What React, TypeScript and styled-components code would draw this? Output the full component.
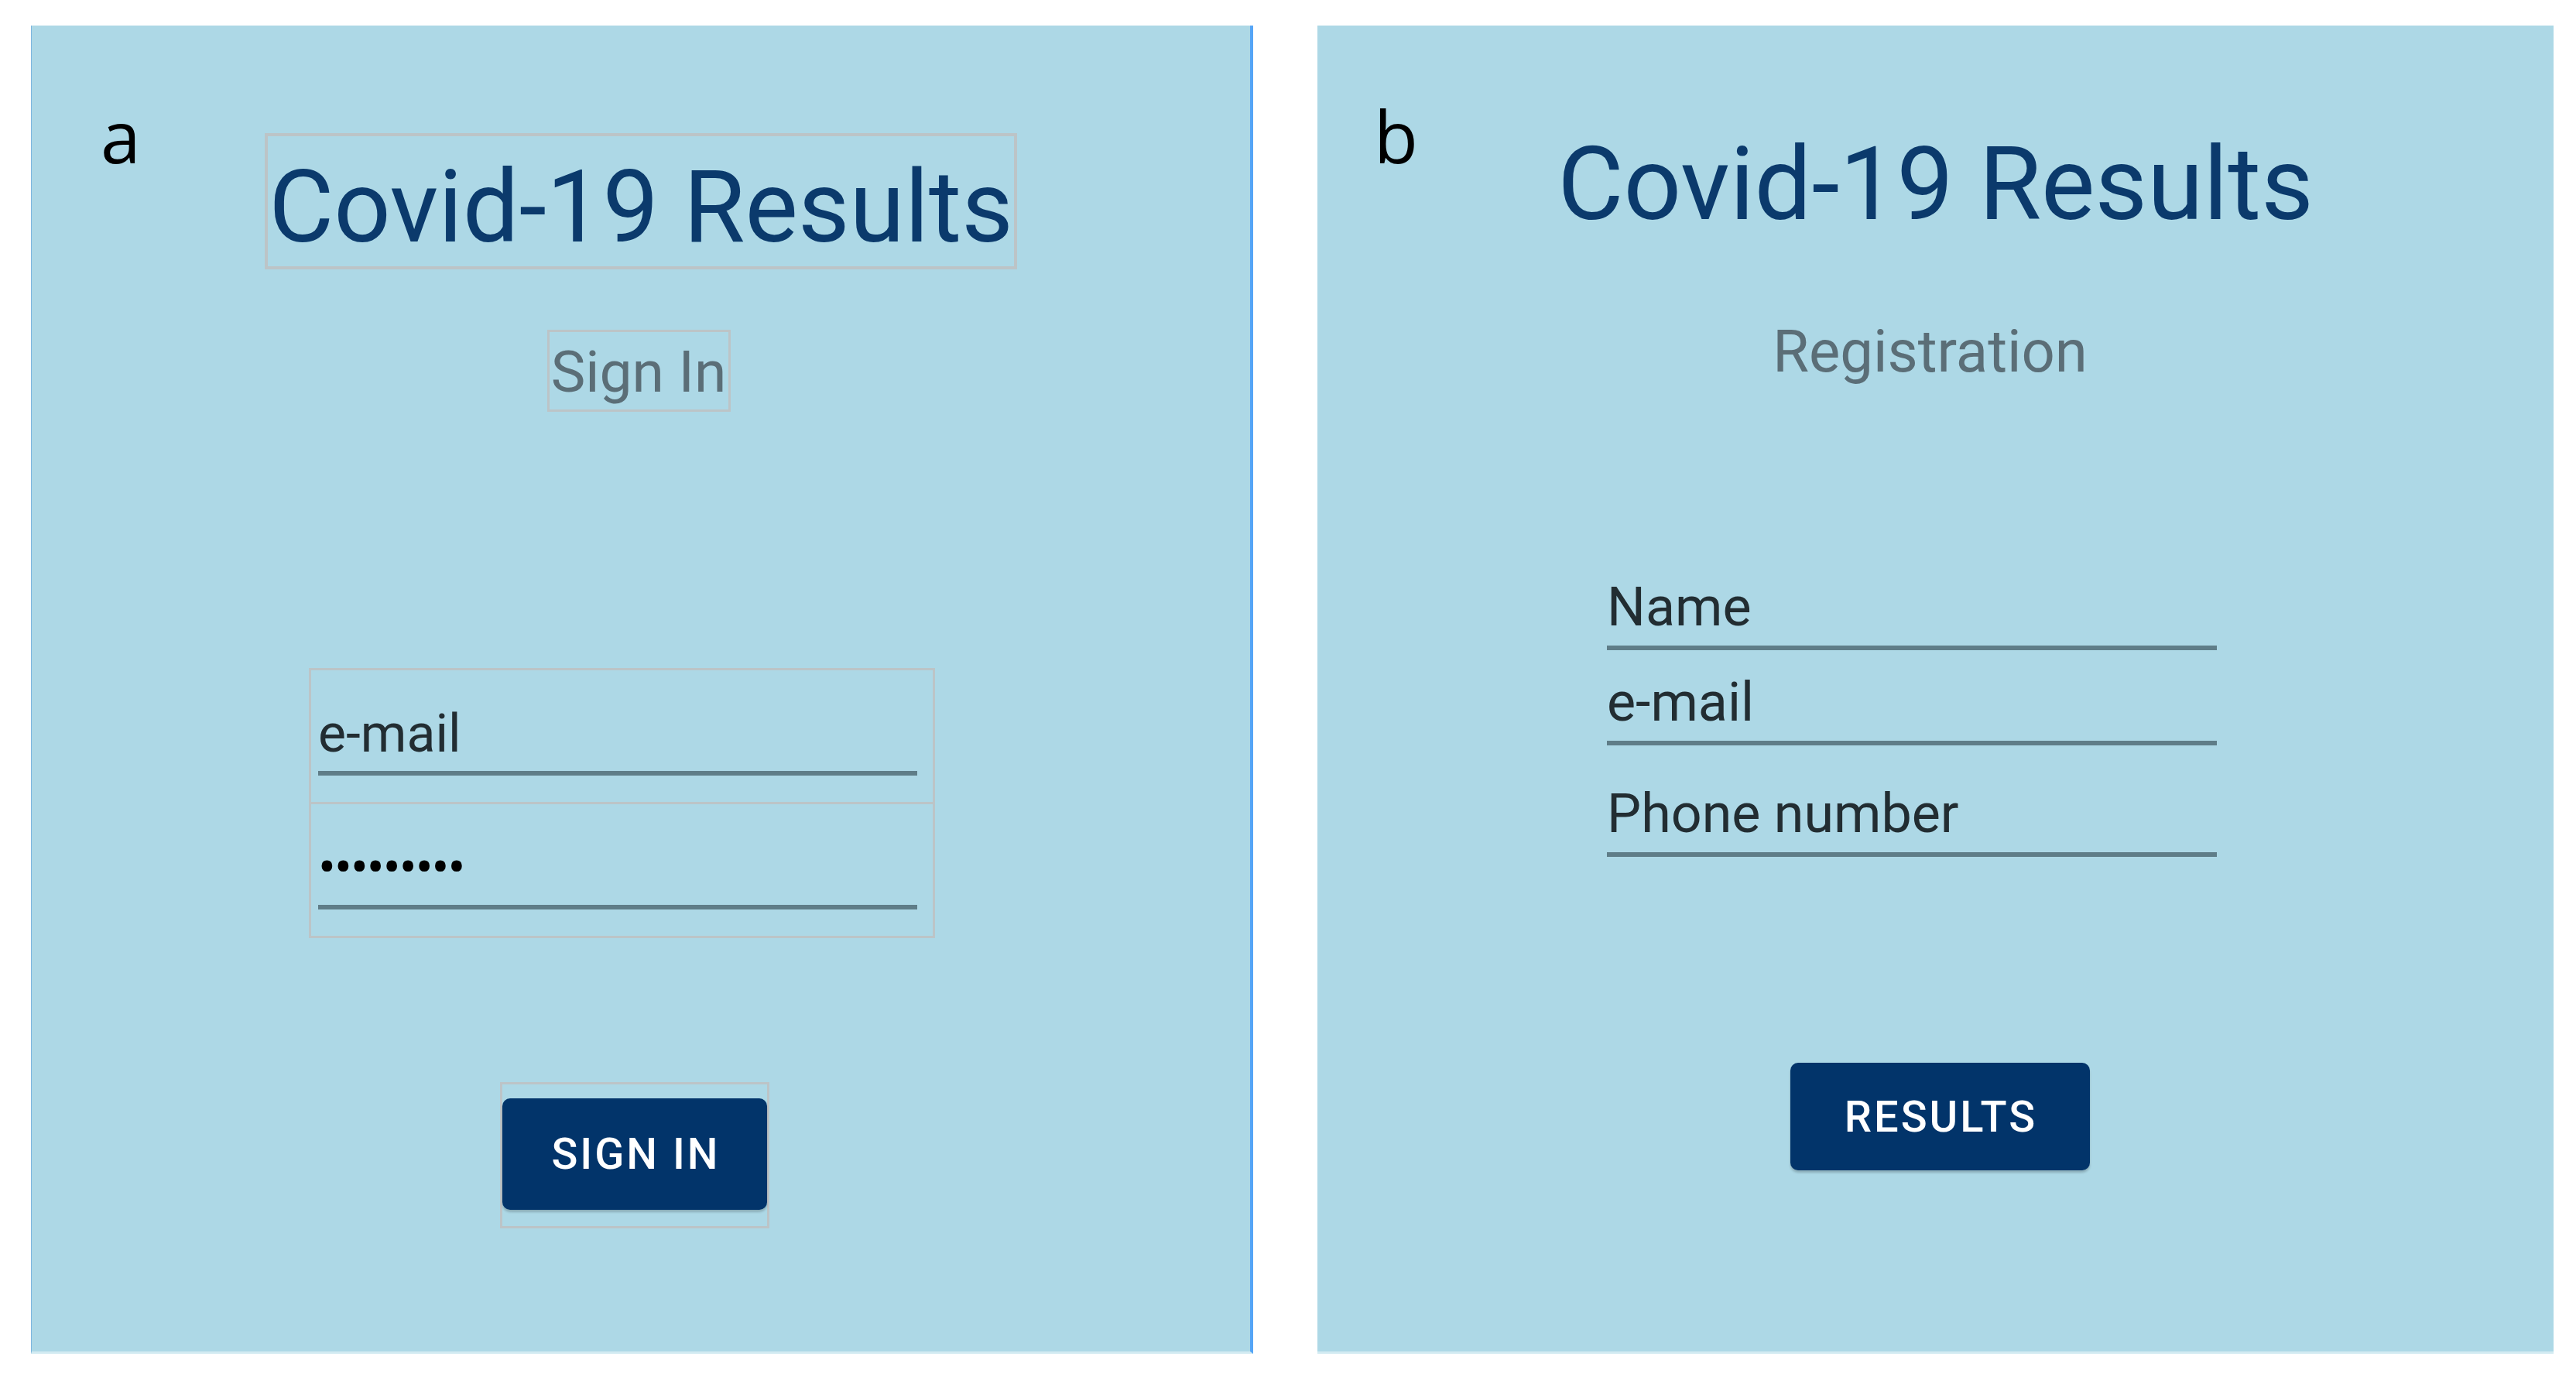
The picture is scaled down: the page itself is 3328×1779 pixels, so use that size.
import React from 'react'
import styled, { createGlobalStyle } from 'styled-components'

const GlobalStyle = createGlobalStyle`
    html, body {
        margin: 0;
        padding: 0;
        background: #ffffff;
    }
    body {
        font-family: Roboto, 'Noto Sans', sans-serif;
    }
`

const Page = styled.div`
    display: flex;
    align-items: flex-start;
    gap: 83px;
    width: 3328px;
    height: 1779px;
    padding: 33px 0 0 40px;
    box-sizing: border-box;
`

const Panel = styled.section<{ $width: number; $edged?: boolean }>`
    position: relative;
    display: flex;
    flex-direction: column;
    align-items: center;
    width: ${(p) => p.$width}px;
    height: 1716px;
    box-sizing: border-box;
    background: #add8e6;
    border-bottom: 3px solid #d3ebf2;
    ${(p) =>
        p.$edged &&
        `
        border-left: 1px solid #7cb6df;
        border-right: 4px solid #55a5f6;
    `}
`

const FigureLabel = styled.span<{ $left: number }>`
    position: absolute;
    top: 96px;
    left: ${(p) => p.$left}px;
    font-family: 'Open Sans', sans-serif;
    font-size: 93px;
    line-height: 93px;
    color: #000;
`

// grey layout-bounds outline drawn around widgets in the left screen
const Bounds = styled.div<{ $width: number; $border?: number }>`
    width: ${(p) => p.$width}px;
    box-sizing: border-box;
    border: ${(p) => p.$border ?? 3}px solid #bcc4c7;
`

const TitleFrame = styled(Bounds)`
    margin-top: 139px;
    height: 176px;
    padding-top: 27px;
    text-align: center;
`

const Title = styled.h1<{ $size: number; $top?: number }>`
    margin: ${(p) => p.$top ?? 0}px 0 0;
    font-family: Roboto, sans-serif;
    font-weight: 400;
    font-size: ${(p) => p.$size}px;
    line-height: ${(p) => p.$size}px;
    color: #0b3a6c;
    white-space: nowrap;
`

const SubtitleFrame = styled(Bounds)`
    margin: 78px 6px 0 0;
    height: 106px;
    padding-top: 3px;
    text-align: center;
`

const Subtitle = styled.h2<{ $size: number; $lh: number; $top?: number; $shift?: number }>`
    margin: ${(p) => p.$top ?? 0}px ${(p) => p.$shift ?? 0}px 0 0;
    font-family: Roboto, sans-serif;
    font-weight: 400;
    font-size: ${(p) => p.$size}px;
    line-height: ${(p) => p.$lh}px;
    color: #5b6e77;
    white-space: nowrap;
`

const FieldBox = styled(Bounds)`
    margin: 331px 49px 0 0;
`

const FieldCell = styled.div`
    padding: 42px 20px 34px 9px;
    & + & {
        border-top: 3px solid #bcc4c7;
    }
`

const FieldList = styled.div`
    display: flex;
    flex-direction: column;
    width: 788px;
    margin: 245px 61px 0 0;
`

const FieldValue = styled.div<{ $size: number; $gap?: number; $pad: number }>`
    margin-top: ${(p) => p.$gap ?? 0}px;
    padding-bottom: ${(p) => p.$pad}px;
    border-bottom: 6px solid #5f7d88;
    font-family: Roboto, sans-serif;
    font-size: ${(p) => p.$size}px;
    line-height: 80px;
    color: #222d32;
    white-space: nowrap;
`

const PasswordDots = styled.span`
    color: #000;
    letter-spacing: -2px;
`

const ButtonFrame = styled(Bounds)`
    margin: 186px 16px 0 0;
    padding: 18px 0 21px;
`

const Button = styled.button<{ $width?: number; $height: number; $top?: number; $shift?: number }>`
    display: flex;
    align-items: center;
    justify-content: center;
    width: ${(p) => (p.$width ? `${p.$width}px` : '100%')};
    height: ${(p) => p.$height}px;
    margin: ${(p) => p.$top ?? 0}px 0 0 ${(p) => p.$shift ?? 0}px;
    padding: 0 0 0 3px;
    border: none;
    border-radius: 10px;
    background: #02346a;
    box-shadow: 0 3px 3px rgba(0, 0, 0, 0.2);
    color: #ffffff;
    font-family: Roboto, sans-serif;
    font-weight: 500;
    font-size: 56px;
    letter-spacing: 3px;
    text-transform: uppercase;
    cursor: pointer;
`

const SignInScreen = () => (
    <Panel $width={1579} $edged>
        <FigureLabel $left={89}>a</FigureLabel>
        <TitleFrame $width={972} $border={4}>
            <Title $size={129}>Covid-19 Results</Title>
        </TitleFrame>
        <SubtitleFrame $width={237}>
            <Subtitle $size={75} $lh={97}>
                Sign In
            </Subtitle>
        </SubtitleFrame>
        <FieldBox $width={809}>
            <FieldCell>
                <FieldValue $size={68} $pad={8}>
                    e-mail
                </FieldValue>
            </FieldCell>
            <FieldCell>
                <FieldValue $size={68} $pad={8}>
                    <PasswordDots>•••••••••</PasswordDots>
                </FieldValue>
            </FieldCell>
        </FieldBox>
        <ButtonFrame $width={348}>
            <Button $height={144}>Sign in</Button>
        </ButtonFrame>
    </Panel>
)

const RegistrationScreen = () => (
    <Panel $width={1597}>
        <FigureLabel $left={73}>b</FigureLabel>
        <Title $size={131} $top={140}>
            Covid-19 Results
        </Title>
        <Subtitle $size={76} $lh={90} $top={105} $shift={14}>
            Registration
        </Subtitle>
        <FieldList>
            <FieldValue $size={70} $pad={10}>
                Name
            </FieldValue>
            <FieldValue $size={70} $pad={10} $gap={27}>
                e-mail
            </FieldValue>
            <FieldValue $size={70} $pad={10} $gap={48}>
                Phone number
            </FieldValue>
        </FieldList>
        <Button $width={387} $height={139} $top={266} $shift={11}>
            Results
        </Button>
    </Panel>
)

const App = () => (
    <>
        <GlobalStyle />
        <Page>
            <SignInScreen />
            <RegistrationScreen />
        </Page>
    </>
)

export default App
